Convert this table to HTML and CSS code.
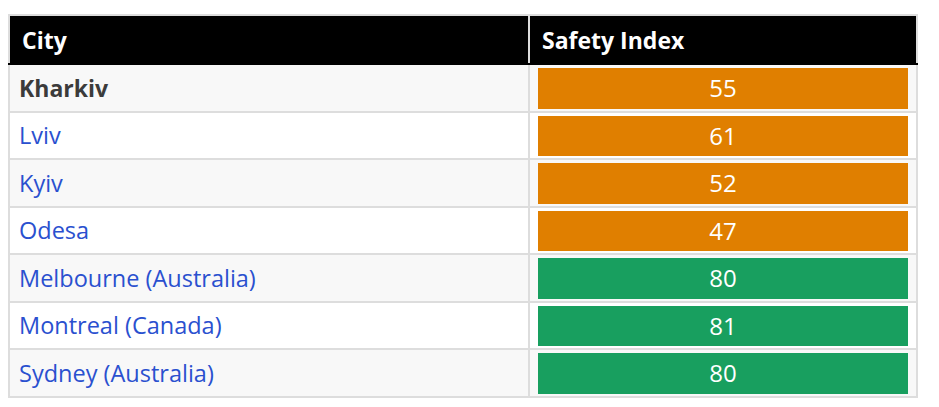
FILE: index.html
```html
<!DOCTYPE html>
<html lang="en">
<head>
<meta charset="utf-8">
<title>Safety Index</title>
<link rel="stylesheet" href="styles.css">
</head>
<body>
<table class="safety">
  <thead>
    <tr>
      <th class="col-city">City</th>
      <th class="col-index">Safety Index</th>
    </tr>
  </thead>
  <tbody>
    <tr>
      <td class="city city-current">Kharkiv</td>
      <td class="index"><div class="badge badge-mid">55</div></td>
    </tr>
    <tr>
      <td class="city"><a href="#">Lviv</a></td>
      <td class="index"><div class="badge badge-mid">61</div></td>
    </tr>
    <tr>
      <td class="city"><a href="#">Kyiv</a></td>
      <td class="index"><div class="badge badge-mid">52</div></td>
    </tr>
    <tr>
      <td class="city"><a href="#">Odesa</a></td>
      <td class="index"><div class="badge badge-mid">47</div></td>
    </tr>
    <tr>
      <td class="city"><a href="#">Melbourne (Australia)</a></td>
      <td class="index"><div class="badge badge-high">80</div></td>
    </tr>
    <tr>
      <td class="city"><a href="#">Montreal (Canada)</a></td>
      <td class="index"><div class="badge badge-high">81</div></td>
    </tr>
    <tr>
      <td class="city"><a href="#">Sydney (Australia)</a></td>
      <td class="index"><div class="badge badge-high">80</div></td>
    </tr>
  </tbody>
</table>
</body>
</html>
```

FILE: styles.css
```css
html, body {
  background: #ffffff;
}

body {
  margin: 14px 8px;
  font-family: "Open Sans", "Noto Sans", "Liberation Sans", sans-serif;
}

.safety {
  border-collapse: collapse;
  width: 910px;
  table-layout: fixed;
}

.safety th,
.safety td {
  border: 2px solid #dddddd;
}

.safety th {
  background: #000000;
  color: #ffffff;
  text-align: left;
  font-weight: 700;
  font-size: 23px;
  height: 47px;
  padding: 0 12px;
  border-bottom-color: #000000;
  vertical-align: middle;
}

.col-city {
  width: 494px;
}

.safety tbody tr:nth-child(odd) td {
  background: #f8f8f8;
}

.safety tbody tr:nth-child(even) td {
  background: #ffffff;
}

.city {
  font-size: 23.5px;
  padding: 0 9px;
  vertical-align: middle;
}

.city a {
  color: #2a50cf;
  text-decoration: none;
}

.city-current {
  font-weight: 700;
  font-size: 23px;
  color: #3b3b3b;
}

.index {
  padding: 3px 8px 2px 8px;
}

.badge {
  height: 40.5px;
  line-height: 40.5px;
  text-align: center;
  color: #ffffff;
  font-size: 24px;
}

.badge-mid {
  background: #e07f00;
}

.badge-high {
  background: #189f5f;
}
```
